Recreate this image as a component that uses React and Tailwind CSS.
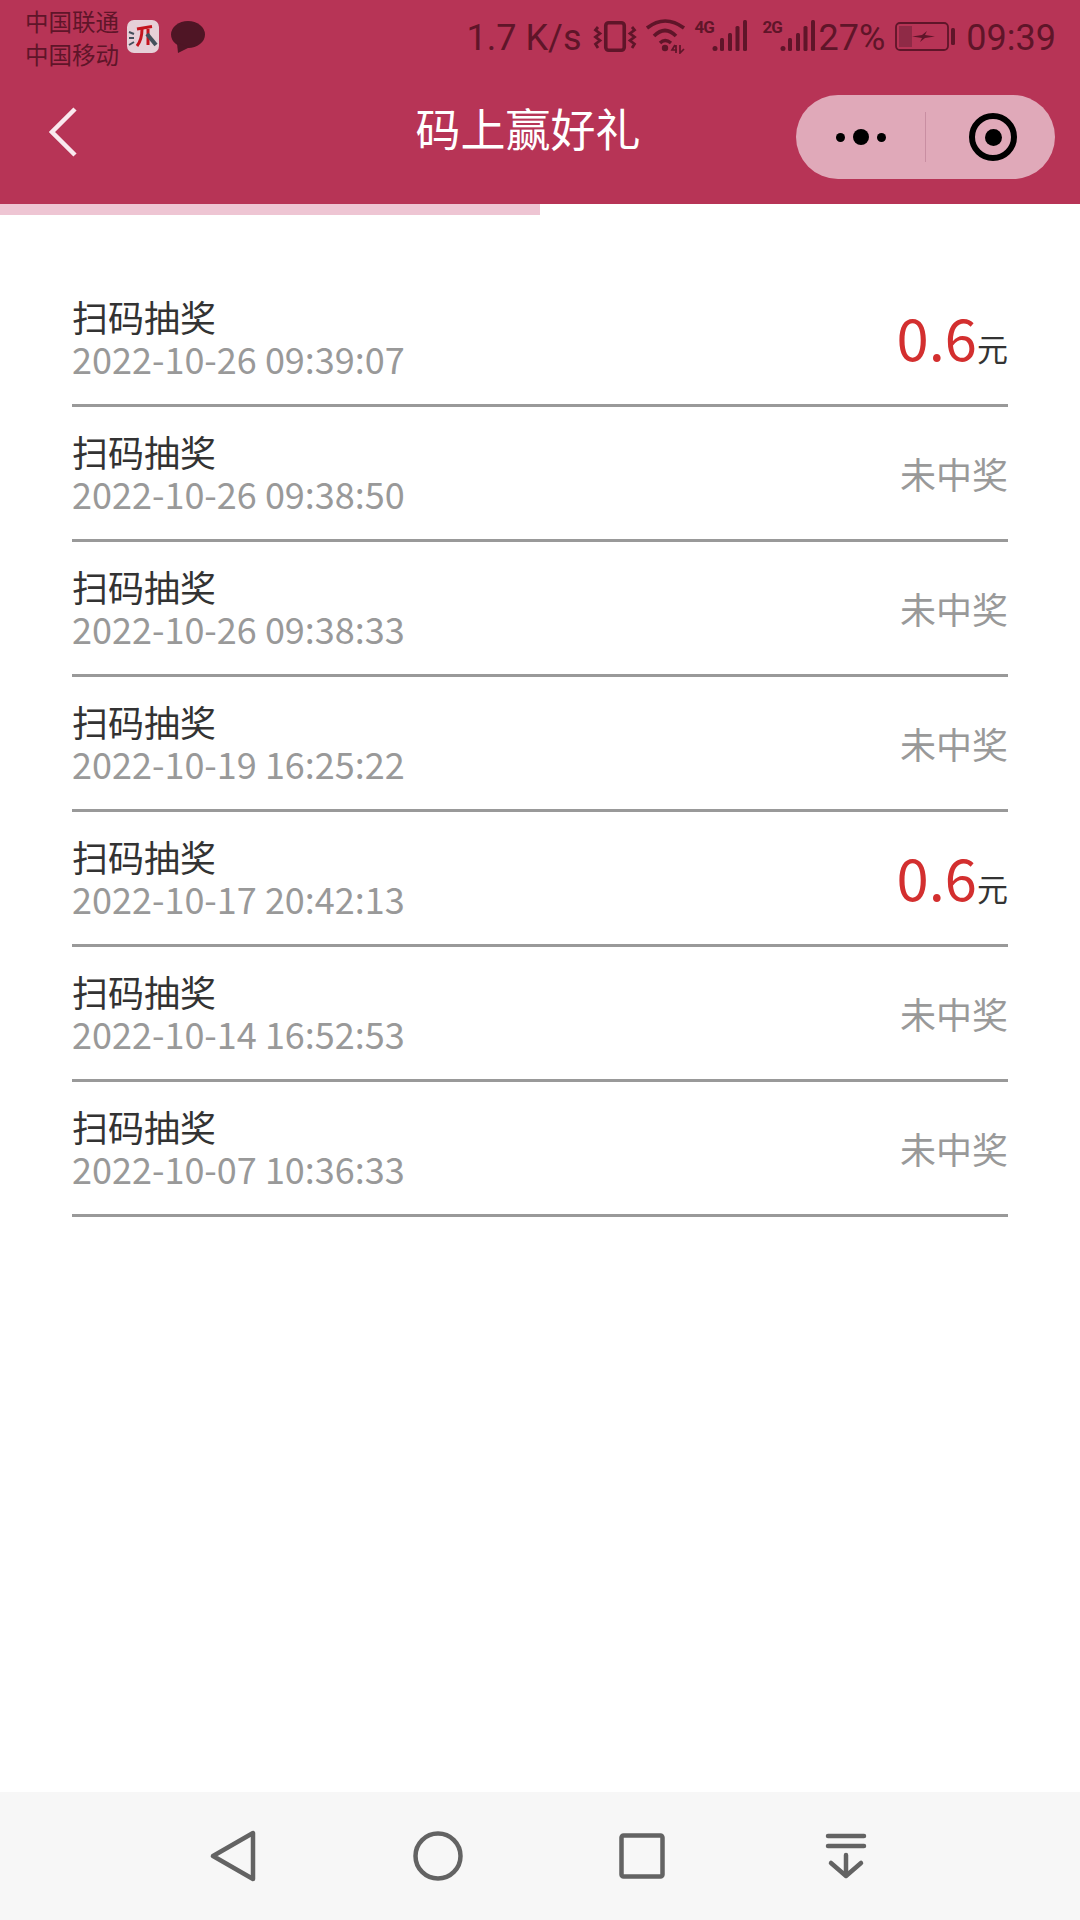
import React from "react";

const rows = [
  ["2022-10-26 09:39:07", true],
  ["2022-10-26 09:38:50", false],
  ["2022-10-26 09:38:33", false],
  ["2022-10-19 16:25:22", false],
  ["2022-10-17 20:42:13", true],
  ["2022-10-14 16:52:53", false],
  ["2022-10-07 10:36:33", false],
];

function AppIcon() {
  return (
    <svg width="32" height="33" viewBox="0 0 32 33">
      <rect width="32" height="33" rx="7" fill="#e6d0d8" />
      <path d="M10 9 L25 6.5" stroke="#c4141e" strokeWidth="3" />
      <path d="M15 9 C15 16 14 21 10 26" stroke="#c4141e" strokeWidth="3" fill="none" />
      <path d="M21 9 L21 25" stroke="#c4141e" strokeWidth="3" />
      <path d="M20 14 L29 25" stroke="#44505c" strokeWidth="4" />
      <path d="M2 12 L7 14 M2 18 L7 18 M2 25 L7 22" stroke="#44505c" strokeWidth="2" />
    </svg>
  );
}

function Bubble() {
  return (
    <svg width="34" height="32" viewBox="0 0 34 32">
      <ellipse cx="17" cy="13.5" rx="17" ry="13.5" fill="#4f1525" />
      <path d="M6 22 L7 32 L19 26 Z" fill="#4f1525" />
    </svg>
  );
}

function Vibrate() {
  return (
    <svg width="44" height="36" viewBox="0 0 44 36" fill="none" stroke="#5f1529" className="-mt-[4px]">
      <rect x="12.75" y="4.75" width="18.5" height="27.5" rx="3" strokeWidth="3.6" />
      <path d="M5 9 L2.5 12 L7 15.5 L2.5 19 L7 22.5 L2.5 26 L5 30" strokeWidth="2.8" />
      <path d="M39 9 L41.5 12 L37 15.5 L41.5 19 L37 22.5 L41.5 26 L39 30" strokeWidth="2.8" />
    </svg>
  );
}

function Wifi() {
  return (
    <svg width="42" height="36" viewBox="0 0 42 36" fill="none" stroke="#5f1529" className="-mt-[4px]">
      <path d="M2 10 Q20 -4 39 10" strokeWidth="3.6" />
      <path d="M9 18 Q20 7 31 18" strokeWidth="3.6" />
      <path d="M15 25 Q20 20 26 25" strokeWidth="3.4" />
      <circle cx="20" cy="30" r="3.2" fill="#5f1529" stroke="none" />
      <path d="M30 27 L27 32 L32 32 M31 27 L31 35 M35 27 L35 35 L39 31" strokeWidth="1.7" />
    </svg>
  );
}

function Signal({ label }) {
  return (
    <span className="relative -mt-[6px] block h-[34px] w-[52px]">
      <span className="absolute left-0 top-[-1px] font-['Roboto',sans-serif] text-[17px] leading-[20px] font-bold tracking-[-1px] text-[#5f1529]">{label}</span>
      <svg width="52" height="34" viewBox="0 0 52 34" fill="#5f1529">
        <circle cx="20" cy="30.5" r="2.5" />
        <rect x="25" y="20" width="4" height="13" rx="1.5" />
        <rect x="33" y="15" width="4" height="18" rx="1.5" />
        <rect x="40.5" y="8" width="4" height="25" rx="1.5" />
        <rect x="48" y="2" width="4" height="31" rx="1.5" />
      </svg>
    </span>
  );
}

function Battery() {
  return (
    <svg width="60" height="30" viewBox="0 0 60 30" fill="none" className="-mt-[2px]">
      <rect x="1" y="1" width="52" height="27" rx="4" stroke="#5f1529" strokeWidth="1.8" />
      <rect x="4" y="4" width="13" height="21" fill="#8f2a46" />
      <path d="M17 14.5 L27 13 L32 9 L30 13 L40 14.5 L30 16 L25 20 L27 16 Z" fill="#5f1529" />
      <rect x="56" y="6" width="4" height="17" rx="1.5" fill="#5f1529" />
    </svg>
  );
}

function Row({ time, won }) {
  return (
    <div className="flex h-[135px] items-center justify-between border-b-[3px] border-[#999999]">
      <div className="flex flex-col pb-[2px]">
        <div className="text-[36px] leading-[42px] text-[#333333]">扫码抽奖</div>
        <div className="text-[36px] leading-[42px] text-[#999999]">{time}</div>
      </div>
      {won ? (
        <div className="flex items-baseline pt-[7px] leading-[70px]">
          <span className="text-[58px] text-[#d32f2f]">0.6</span>
          <span className="text-[31px] text-[#333333]">元</span>
        </div>
      ) : (
        <div className="text-[36px] text-[#999999]">未中奖</div>
      )}
    </div>
  );
}

export default function App() {
  return (
    <div className="flex h-[1920px] w-[1080px] flex-col bg-white font-['Noto_Sans_CJK_SC','Noto_Sans',sans-serif]">
      <div className="h-[204px] bg-[#b73456]">
        <div className="flex h-[76px] items-center justify-between pl-[25px] pr-[24px]">
          <div className="flex items-center">
            <div className="flex flex-col text-[23.5px] leading-[33px] text-[#5f1529]">
              <span>中国联通</span>
              <span>中国移动</span>
            </div>
            <span className="ml-[8px] -mt-[3px]"><AppIcon /></span>
            <span className="ml-[12px] -mt-[2px]"><Bubble /></span>
          </div>
          <div className="flex items-center font-['Roboto',sans-serif] text-[36px] text-[#5f1529]">
            <span>1.7 K/s</span>
            <span className="ml-[11px]"><Vibrate /></span>
            <span className="ml-[8px]"><Wifi /></span>
            <span className="ml-[8px]"><Signal label="4G" /></span>
            <span className="ml-[16px]"><Signal label="2G" /></span>
            <span className="ml-[4px]">27%</span>
            <span className="ml-[10px]"><Battery /></span>
            <span className="ml-[11px]">09:39</span>
          </div>
        </div>
        <div className="relative flex h-[128px] items-center pl-[49px] pr-[25px]">
          <svg width="28" height="52" viewBox="0 0 28 52" fill="none" stroke="#f9e9ee" strokeWidth="4.5" className="mb-[16px]">
            <path d="M26 3 L3 26 L26 49" />
          </svg>
          <div className="absolute left-0 top-[-12px] w-[1056px] text-center text-[45px] leading-[128px] text-white">码上赢好礼</div>
          <div className="ml-auto mb-[6px] flex h-[84px] w-[259px] items-center rounded-full bg-[#e0a9b9]">
            <div className="flex w-[129px] items-center justify-center gap-[8px]">
              <span className="h-[9px] w-[9px] rounded-full bg-black" />
              <span className="h-[16px] w-[16px] rounded-full bg-black" />
              <span className="h-[9px] w-[9px] rounded-full bg-black" />
            </div>
            <div className="h-[50px] w-px bg-[#c98ea2]" />
            <div className="flex flex-1 items-center justify-center pl-[5px]">
              <div className="flex h-[48px] w-[48px] items-center justify-center rounded-full border-[6px] border-black">
                <span className="h-[17px] w-[17px] rounded-full bg-black" />
              </div>
            </div>
          </div>
        </div>
      </div>
      <div className="h-[11px] w-[540px] bg-[#eec5d3]" />
      <div className="flex flex-1 flex-col px-[72px] pt-[57px]">
        {rows.map(([t, w]) => (
          <Row key={t} time={t} won={w} />
        ))}
      </div>
      <div className="flex h-[128px] items-center bg-[#f7f7f7] pl-[210px]">
        <svg width="46" height="52" viewBox="0 0 46 52" fill="none" stroke="#636363" strokeWidth="4.5" strokeLinejoin="round">
          <path d="M43 3 L43 49 L3 26 Z" />
        </svg>
        <svg width="50" height="50" viewBox="0 0 50 50" fill="none" stroke="#636363" strokeWidth="4.5" className="ml-[157px]">
          <circle cx="25" cy="25" r="22.5" />
        </svg>
        <svg width="46" height="46" viewBox="0 0 46 46" fill="none" stroke="#636363" strokeWidth="4.5" strokeLinejoin="round" className="ml-[156px]">
          <rect x="2.5" y="2.5" width="41" height="41" rx="2" />
        </svg>
        <svg width="42" height="46" viewBox="0 0 42 46" fill="none" stroke="#636363" strokeWidth="4.5" strokeLinecap="round" strokeLinejoin="round" className="ml-[160px]">
          <path d="M3 3 L39 3 M3 13 L39 13 M21 22 L21 43 M6 30 L21 43 L36 30" />
        </svg>
      </div>
    </div>
  );
}
